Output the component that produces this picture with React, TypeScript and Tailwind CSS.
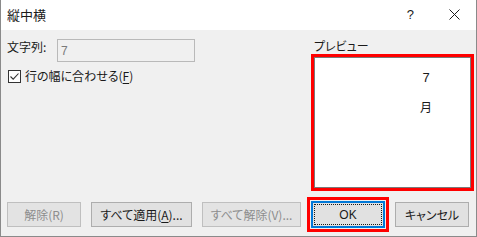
import type { ReactNode } from 'react';

const FONT = "[font-family:'Noto_Sans_CJK_JP','Noto_Sans',sans-serif] [font-feature-settings:'palt']";

function Btn({ children, disabled, w }: { children: ReactNode; disabled?: boolean; w: string }) {
  return (
    <div
      className={`${w} h-[25px] flex items-center justify-center border border-[#adadad] bg-[#e1e1e1] text-[12px] leading-[16px] ${
        disabled ? 'text-[#8d8d8d] border-[#bfbfbf] bg-[#e3e3e3]' : 'text-[#1a1a1a]'
      }`}
    >
      {children}
    </div>
  );
}

export default function App() {
  return (
    <div className={`w-[477px] h-[237px] flex flex-col border-x border-b border-[#8a8a8a] bg-[#f0f0f0] text-[#1a1a1a] ${FONT}`}>
      {/* Title bar */}
      <div className="h-[30px] flex items-center bg-white pl-[6px] pr-[16px] shrink-0">
        <span className="text-[13px] leading-[16px]">縦中横</span>
        <span className="ml-auto text-[13px] leading-[16px] mr-[35px] [font-family:'Liberation_Sans',sans-serif]">?</span>
        <svg width="11" height="11" viewBox="0 0 11 11" className="mb-[1px]">
          <path d="M0.5 0.5 L10.5 10.5 M10.5 0.5 L0.5 10.5" stroke="#1a1a1a" strokeWidth="1" fill="none" />
        </svg>
      </div>

      {/* Body */}
      <div className="flex-1 flex flex-col">
        <div className="flex">
          {/* Left column */}
          <div className="pl-[6px] pt-[9px]">
            <div className="flex items-start">
              <span className="w-[50px] text-[12px] leading-[16px]">文字列:</span>
              <div className="w-[138px] h-[23px] border border-[#b9b9b9] bg-[#f0f0f0] flex items-center pl-[3px] text-[12px] text-[#7a7a7a] [font-family:'Liberation_Sans',sans-serif]">
                7
              </div>
            </div>
            <div className="flex items-center mt-[6px] h-[16px]">
              <div className="ml-[1px] w-[13px] h-[13px] border border-[#333] bg-white flex items-center justify-center">
                <svg width="11" height="11" viewBox="0 0 11 11">
                  <path d="M1.5 5.5 L4.2 8.2 L9.5 2.5" stroke="#333" strokeWidth="1.1" fill="none" />
                </svg>
              </div>
              <span className="ml-[4px] text-[12px] leading-[16px]">
                行の幅に合わせる(<span className="underline underline-offset-2">F</span>)
              </span>
            </div>
          </div>

          {/* Preview */}
          <div className="ml-auto mr-[2px] pt-[8px] w-[163px]">
            <div className="pl-[3px] text-[12px] leading-[16px]">プレビュー</div>
            <div className="h-[137px] border-[3px] border-[#ff0000]">
              <div className="h-full border border-[#7a7a7a] bg-white">
                <div className="ml-[101px] w-[20px] pt-[12px] flex flex-col items-center gap-[13px] text-[12px] leading-[16px]">
                  <span className="[font-family:'Liberation_Sans',sans-serif] text-[13px]">7</span>
                  <span>月</span>
                </div>
              </div>
            </div>
          </div>
        </div>

        {/* Buttons */}
        <div className="mt-auto mb-[4px] h-[35px] flex items-center pl-[6px]">
          <Btn w="w-[74px]" disabled>解除(R)</Btn>
          <div className="ml-[10px]">
            <Btn w="w-[101px]">
              すべて適用(<span className="underline underline-offset-2">A</span>)...
            </Btn>
          </div>
          <div className="ml-[10px]">
            <Btn w="w-[99px]" disabled>すべて解除(V)...</Btn>
          </div>
          <div className="ml-[6px] h-[35px] w-[82px] border-[3px] border-[#ff0000] p-[1px]">
            <div className="h-full w-full border-2 border-[#0078d7] bg-[#e1e1e1] p-[1px]">
              <div className="h-full w-full border border-dotted border-[#1a1a1a] flex items-center justify-center text-[12px] leading-[16px] [font-family:'Liberation_Sans',sans-serif]">
                OK
              </div>
            </div>
          </div>
          <div className="ml-[6px]">
            <Btn w="w-[74px]">キャンセル</Btn>
          </div>
        </div>
      </div>
    </div>
  );
}
